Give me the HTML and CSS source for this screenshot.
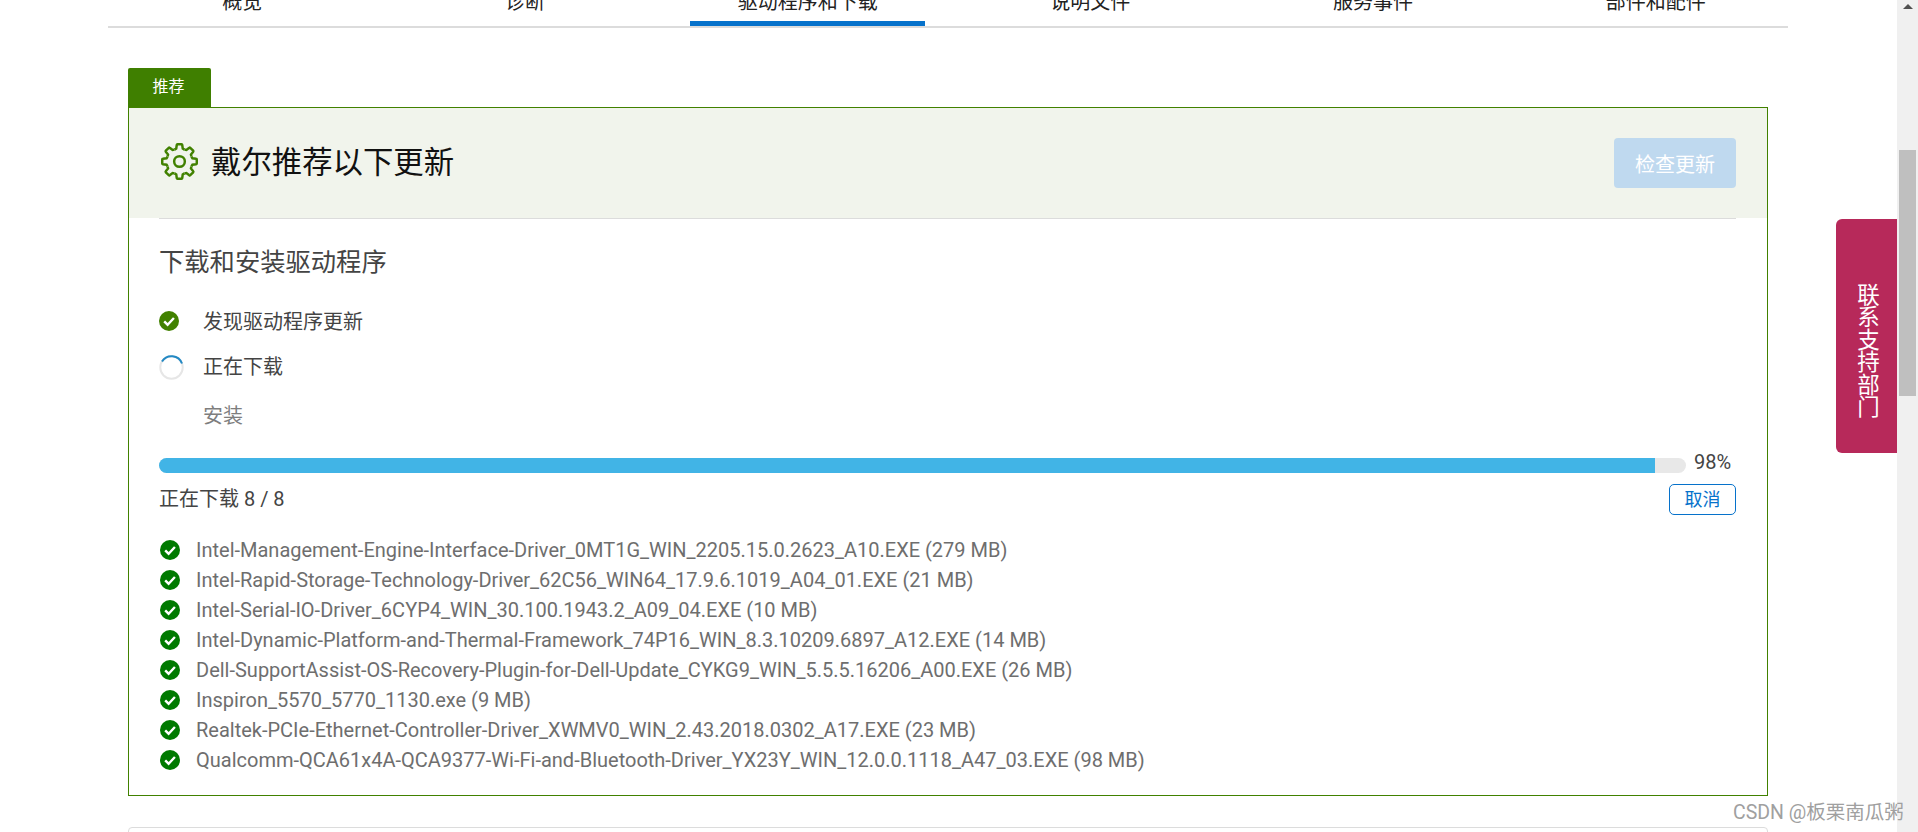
FILE: index.html
```html
<!DOCTYPE html>
<html lang="zh-CN">
<head>
<meta charset="utf-8">
<title>驱动程序和下载</title>
<link rel="stylesheet" href="styles.css">
</head>
<body>
<svg class="defs" width="0" height="0" aria-hidden="true">
  <defs>
    <path id="tooth" d="M-4.78-11.55-3.15-12.61-2.66-16.2Q-2.6-16.8-2-16.8H2Q2.6-16.8 2.66-16.2L3.15-12.61 4.78-11.55"/>
    <g id="check-mark"><path d="M5.2 10.3 8.6 13.7 14.9 7" fill="none" stroke="#fff" stroke-width="2.4"/></g>
  </defs>
</svg>
<div class="page">
  <main class="main">
    <nav class="tabs">
      <div class="tab-row">
        <a class="tab">概览</a>
        <a class="tab">诊断</a>
        <a class="tab tab-active">驱动程序和下载</a>
        <a class="tab">说明文件</a>
        <a class="tab">服务事件</a>
        <a class="tab">部件和配件</a>
      </div>
    </nav>
    <div class="content">
      <div class="tag">推荐</div>
      <section class="panel">
        <header class="panel-head">
          <svg class="gear" viewBox="-18 -18 36 36" aria-hidden="true">
            <g fill="none" stroke="#418100" stroke-width="2.4">
              <use href="#tooth"/>
              <use href="#tooth" transform="rotate(45)"/>
              <use href="#tooth" transform="rotate(90)"/>
              <use href="#tooth" transform="rotate(135)"/>
              <use href="#tooth" transform="rotate(180)"/>
              <use href="#tooth" transform="rotate(225)"/>
              <use href="#tooth" transform="rotate(270)"/>
              <use href="#tooth" transform="rotate(315)"/>
              <circle r="5.2"/>
            </g>
          </svg>
          <h1 class="panel-title">戴尔推荐以下更新</h1>
          <button class="check-btn">检查更新</button>
        </header>
        <div class="divider"></div>
        <div class="panel-body">
          <h2 class="section-title">下载和安装驱动程序</h2>
          <ul class="steps">
            <li class="step step-done">
              <span class="step-icon">
                <svg class="icon-20" viewBox="0 0 20 20" aria-hidden="true"><circle cx="10" cy="10" r="10" fill="#418100"/><use href="#check-mark"/></svg>
              </span>
              <span class="step-text">发现驱动程序更新</span>
            </li>
            <li class="step step-active">
              <span class="step-icon">
                <svg class="spinner" viewBox="0 0 25 25" aria-hidden="true">
                  <circle cx="12.5" cy="12.5" r="11.2" fill="none" stroke="#e6e6e6" stroke-width="2"/>
                  <path d="M3 6.5A11.2 11.2 0 0 1 23 8.5" fill="none" stroke="#2389c4" stroke-width="2"/>
                </svg>
              </span>
              <span class="step-text">正在下载</span>
            </li>
            <li class="step step-todo">
              <span class="step-icon"></span>
              <span class="step-text">安装</span>
            </li>
          </ul>
          <div class="progress-row">
            <div class="progress"><div class="progress-fill" style="width:98%"></div></div>
            <span class="percent">98%</span>
          </div>
          <div class="status-row">
            <span class="status">正在下载 8 / 8</span>
            <button class="cancel-btn">取消</button>
          </div>
          <ul class="files">
            <li class="file"><svg class="icon-20" viewBox="0 0 20 20" aria-hidden="true"><circle cx="10" cy="10" r="10" fill="#007a00"/><use href="#check-mark"/></svg>Intel-Management-Engine-Interface-Driver_0MT1G_WIN_2205.15.0.2623_A10.EXE (279 MB)</li>
            <li class="file"><svg class="icon-20" viewBox="0 0 20 20" aria-hidden="true"><circle cx="10" cy="10" r="10" fill="#007a00"/><use href="#check-mark"/></svg>Intel-Rapid-Storage-Technology-Driver_62C56_WIN64_17.9.6.1019_A04_01.EXE (21 MB)</li>
            <li class="file"><svg class="icon-20" viewBox="0 0 20 20" aria-hidden="true"><circle cx="10" cy="10" r="10" fill="#007a00"/><use href="#check-mark"/></svg>Intel-Serial-IO-Driver_6CYP4_WIN_30.100.1943.2_A09_04.EXE (10 MB)</li>
            <li class="file"><svg class="icon-20" viewBox="0 0 20 20" aria-hidden="true"><circle cx="10" cy="10" r="10" fill="#007a00"/><use href="#check-mark"/></svg>Intel-Dynamic-Platform-and-Thermal-Framework_74P16_WIN_8.3.10209.6897_A12.EXE (14 MB)</li>
            <li class="file"><svg class="icon-20" viewBox="0 0 20 20" aria-hidden="true"><circle cx="10" cy="10" r="10" fill="#007a00"/><use href="#check-mark"/></svg>Dell-SupportAssist-OS-Recovery-Plugin-for-Dell-Update_CYKG9_WIN_5.5.5.16206_A00.EXE (26 MB)</li>
            <li class="file"><svg class="icon-20" viewBox="0 0 20 20" aria-hidden="true"><circle cx="10" cy="10" r="10" fill="#007a00"/><use href="#check-mark"/></svg>Inspiron_5570_5770_1130.exe (9 MB)</li>
            <li class="file"><svg class="icon-20" viewBox="0 0 20 20" aria-hidden="true"><circle cx="10" cy="10" r="10" fill="#007a00"/><use href="#check-mark"/></svg>Realtek-PCIe-Ethernet-Controller-Driver_XWMV0_WIN_2.43.2018.0302_A17.EXE (23 MB)</li>
            <li class="file"><svg class="icon-20" viewBox="0 0 20 20" aria-hidden="true"><circle cx="10" cy="10" r="10" fill="#007a00"/><use href="#check-mark"/></svg>Qualcomm-QCA61x4A-QCA9377-Wi-Fi-and-Bluetooth-Driver_YX23Y_WIN_12.0.0.1118_A47_03.EXE (98 MB)</li>
          </ul>
        </div>
      </section>
      <div class="next-card"></div>
    </div>
    <a class="contact">联系支持部门</a>
    <div class="watermark">CSDN @板栗南瓜粥</div>
  </main>
  <aside class="scrollbar">
    <span class="scroll-arrow"></span>
    <span class="scroll-thumb"></span>
  </aside>
</div>
</body>
</html>
```
FILE: styles.css
```css
* { box-sizing: border-box; }
html, body { margin: 0; padding: 0; height: 100%; overflow: hidden; background: #fff; }
body { font-family: Roboto, "Noto Sans CJK SC", sans-serif; color: #444; }
h1, h2, ul { margin: 0; padding: 0; font-weight: 400; }
ul { list-style: none; }
button { font-family: inherit; cursor: pointer; }
.defs { position: absolute; }

.page { display: flex; height: 832px; overflow: hidden; }
.main { flex: 1; min-width: 0; position: relative; overflow: visible; }

.tabs { margin: -13px 0 0 108px; width: 1680px; height: 41px; border-bottom: 2px solid #dcdcdc; }
.tab-row { display: flex; margin: 0 -9px 0 -7px; height: 39px; }
.tab { flex: 1; display: block; position: relative; text-align: center; font-size: 20px; line-height: 30px; color: #222; }
.tab-active::after { content: ""; position: absolute; left: 24px; right: 24px; bottom: 0; height: 5px; background: #0672cb; }

.content { margin: 40px 0 0 128px; width: 1640px; }
.tag { width: 83px; height: 39px; padding-right: 2px; background: #3f7f00; color: #fff; font-size: 16px; line-height: 38px; text-align: center; border-radius: 2px 2px 0 0; }
.panel { border: 1px solid #418100; height: 689px; }
.panel-head { display: flex; align-items: center; height: 110px; background: #f1f4ec; padding: 0 31px 0 32px; }
.gear { width: 37px; height: 37px; margin: -3px 13px 0 0; flex: none; }
.panel-title { flex: 1; font-size: 30.4px; line-height: 40px; color: #111; margin-top: -1px; }
.check-btn { width: 122px; height: 50px; border: 0; border-radius: 4px; background: #bfd9ef; color: #fff; font-size: 20px; }
.divider { height: 1px; margin: 0 31px 0 30px; background: #dcdcdc; }
.panel-body { padding: 29px 31px 0 30px; }
.section-title { font-size: 25.3px; line-height: 30px; color: #444; }

.steps { margin-top: 28px; }
.step { display: flex; align-items: center; height: 30px; font-size: 20px; color: #444; margin-bottom: 15px; }
.step-text { margin-top: -2px; }
.step-icon { width: 44px; flex: none; display: flex; align-items: center; }
.step-todo { color: #7e7e7e; margin: 19px 0 0; }
.icon-20 { width: 20px; height: 20px; display: block; flex: none; }
.spinner { width: 25px; height: 25px; display: block; margin-top: 3px; }

.progress-row { display: flex; align-items: flex-start; margin-top: 28px; height: 15px; }
.progress { width: 1527px; height: 15px; background: #e8e8e8; border-radius: 8px; overflow: hidden; }
.progress-fill { height: 100%; background: #41b4e6; }
.percent { margin: -8px 0 0 8px; font-size: 20px; line-height: 24px; color: #444; }

.status-row { display: flex; align-items: center; justify-content: space-between; height: 31px; margin-top: 11px; font-size: 20px; }
.status { margin-top: -5px; }
.cancel-btn { width: 67px; height: 31px; padding: 0; border: 1px solid #0672cb; border-radius: 5px; background: #fff; color: #0672cb; font-size: 18px; line-height: 29px; }

.files { margin-top: 20px; }
.file { display: flex; align-items: center; gap: 16px; height: 30px; padding-left: 1px; font-size: 20px; color: #6e6e6e; white-space: nowrap; }

.next-card { margin-top: 31px; height: 200px; border: 1px solid #dcdcdc; border-radius: 4px; }

.contact { position: absolute; top: 219px; right: 0; width: 61px; height: 234px; padding-top: 28px; display: flex; align-items: center; justify-content: center; background: #b7295a; border-radius: 6px 0 0 6px; color: #fff; font-size: 22.5px; writing-mode: vertical-rl; }
.watermark { position: absolute; top: 801px; left: 1733px; font-size: 19.5px; line-height: 24px; color: #a0a0a0; white-space: nowrap; z-index: 2; width: 180px; }

.scrollbar { width: 21px; flex: none; background: #f0f0f0; display: flex; flex-direction: column; align-items: center; }
.scroll-arrow { margin-top: 4px; width: 0; height: 0; border-left: 5px solid transparent; border-right: 5px solid transparent; border-bottom: 5px solid #505050; }
.scroll-thumb { margin-top: 141px; width: 17px; height: 246px; background: #bfbfbf; }
```
